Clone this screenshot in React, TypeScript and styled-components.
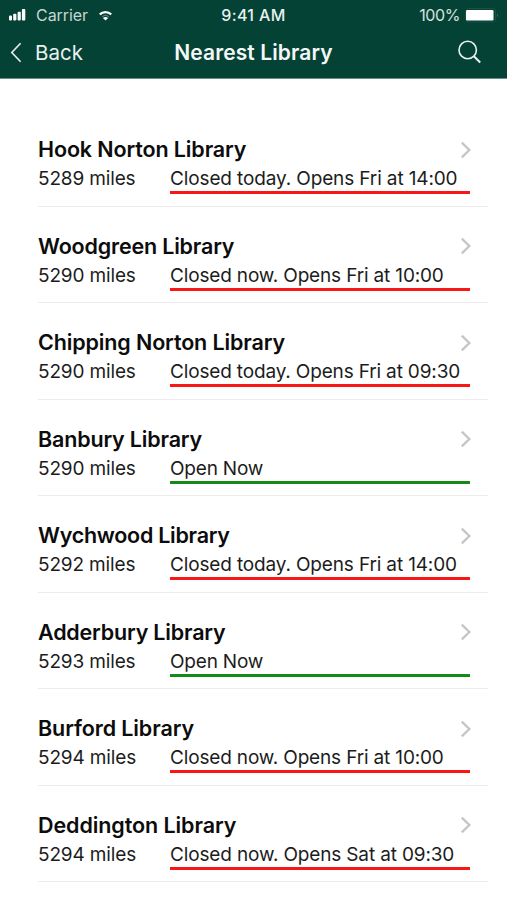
import React from "react";
import styled, { createGlobalStyle } from "styled-components";

const GlobalStyle = createGlobalStyle`
  * { box-sizing: border-box; }
  body { margin: 0; background: #fff; font-family: Inter, "Liberation Sans", sans-serif; }
`;

const Screen = styled.div`
  width: 507px;
  height: 900px;
  overflow: hidden;
  background: #fff;
  color: #0c0c0c;
`;

const Header = styled.header`
  height: 79px;
  background: #054236;
  border-bottom: 1px solid #6d8f87;
  color: #e8f1ee;
`;

const StatusBar = styled.div`
  display: grid;
  grid-template-columns: 1fr auto 1fr;
  align-items: center;
  height: 30px;
  padding: 0 8px;
  font-size: 16px;
  line-height: 20px;
`;

const StatusGroup = styled.div<{ $end?: boolean }>`
  display: flex;
  align-items: center;
  justify-content: ${(p) => (p.$end ? "flex-end" : "flex-start")};
`;

const Carrier = styled.span`
  margin: 0 11px 0 10px;
  letter-spacing: -0.05px;
  color: #c5d5d0;
`;

const Clock = styled.span`
  font-weight: 500;
  letter-spacing: 0.4px;
`;

const Charge = styled.span`
  margin-right: 5px;
  letter-spacing: -0.4px;
  color: #d5e2de;
`;

const NavBar = styled.nav`
  display: grid;
  grid-template-columns: 1fr auto 1fr;
  align-items: center;
  height: 45px;
  padding: 0 10px;
  line-height: 28px;
`;

const BackButton = styled.button`
  display: flex;
  align-items: center;
  gap: 13px;
  padding: 0;
  border: 0;
  background: none;
  color: inherit;
  font: 400 20.5px/28px Inter, sans-serif;
  letter-spacing: 0;
`;

const NavTitle = styled.h1`
  margin: 0;
  font-size: 21px;
  font-weight: 600;
  letter-spacing: 0.1px;
  color: #f3f8f6;
`;

const SearchButton = styled.button`
  justify-self: end;
  display: flex;
  margin: 0 15px 2px 0;
  padding: 0;
  border: 0;
  background: none;
  color: inherit;
`;

const List = styled.ul`
  margin: 31px 19px 0 38px;
  padding: 0;
  list-style: none;
`;

const Row = styled.li`
  height: 96.5px;
  padding: 25px 17.5px 0 0;
  border-bottom: 1px solid #ececec;
`;

const RowTop = styled.div`
  display: flex;
  align-items: center;
  justify-content: space-between;
  height: 29px;
`;

const Name = styled.h2<{ $tracking: number }>`
  margin: 0;
  font-size: 21.5px;
  line-height: 29px;
  font-weight: 600;
  letter-spacing: ${(p) => p.$tracking}px;
  white-space: nowrap;
`;

const Details = styled.div`
  display: grid;
  grid-template-columns: 132px 300px;
  font-size: 19px;
  line-height: 30px;
  color: #1c1c1c;
  white-space: nowrap;
`;

const Distance = styled.span`
  letter-spacing: -0.15px;
`;

const Status = styled.span<{ $open: boolean; $tracking: number }>`
  height: 30px;
  border-bottom: 3px solid ${(p) => (p.$open ? "#168a16" : "#fb1616")};
  letter-spacing: ${(p) => p.$tracking}px;
`;

const Signal = () => (
  <svg width="18" height="12" viewBox="0 0 18 12" fill="#fff">
    <rect x="1" y="6.5" width="3" height="5" rx="1" />
    <rect x="5.2" y="4.7" width="3.2" height="6.8" rx="1" />
    <rect x="9.6" y="2.7" width="3.2" height="8.8" rx="1" />
    <rect x="13.9" y="0" width="3.4" height="11.5" rx="1" />
  </svg>
);

const Wifi = () => (
  <svg width="13" height="11" viewBox="0 0 13 11" fill="none" stroke="#fff">
    <path d="M.8 4.4C4 1.4 9 1.4 12.2 4.4" strokeWidth="2.3" />
    <path d="M3.2 6.8C5.1 5.1 7.9 5.1 9.8 6.8" strokeWidth="1.1" opacity=".35" />
    <path d="M3.9 8Q6.5 5.8 9.1 8L6.5 10.6Z" fill="#fff" stroke="none" />
  </svg>
);

const Battery = () => (
  <svg width="34" height="15" viewBox="0 0 34 15">
    <rect x=".5" y=".5" width="30" height="13.5" rx="3" fill="none" stroke="#1b5145" />
    <rect x="1" y="2" width="27.5" height="10.5" rx="1.2" fill="#fff" />
    <path d="M32 5.3Q34 7.3 32 9.3Z" fill="#386a5f" />
  </svg>
);

const BackIcon = () => (
  <svg width="12" height="22" viewBox="0 0 12 22" fill="none" stroke="currentColor" strokeWidth="1.6">
    <path d="M10.6 1.2 1.8 10.5l8.8 9.3" />
  </svg>
);

const SearchIcon = () => (
  <svg width="24" height="24" viewBox="0 0 24 24" fill="none" stroke="currentColor" strokeWidth="1.6">
    <circle cx="9.7" cy="10" r="8.7" />
    <path d="m15.9 16.2 6.3 6.3" strokeWidth="2" />
  </svg>
);

const Chevron = () => (
  <svg width="11" height="18" viewBox="0 0 11 18" fill="none" stroke="#c5c5c8" strokeWidth="2.4">
    <path d="m1.8 1.6 7.6 7.4-7.6 7.4" />
  </svg>
);

type Library = { name: string; miles: number; status: string; open?: boolean; nameTracking: number; statusTracking: number };

const libraries: Library[] = [
  { name: "Hook Norton Library", miles: 5289, status: "Closed today. Opens Fri at 14:00", nameTracking: -0.12, statusTracking: -0.13 },
  { name: "Woodgreen Library", miles: 5290, status: "Closed now. Opens Fri at 10:00", nameTracking: -0.18, statusTracking: -0.16 },
  { name: "Chipping Norton Library", miles: 5290, status: "Closed today. Opens Fri at 09:30", nameTracking: -0.13, statusTracking: -0.16 },
  { name: "Banbury Library", miles: 5290, status: "Open Now", open: true, nameTracking: -0.17, statusTracking: -0.2 },
  { name: "Wychwood Library", miles: 5292, status: "Closed today. Opens Fri at 14:00", nameTracking: -0.27, statusTracking: -0.15 },
  { name: "Adderbury Library", miles: 5293, status: "Open Now", open: true, nameTracking: -0.19, statusTracking: -0.2 },
  { name: "Burford Library", miles: 5294, status: "Closed now. Opens Fri at 10:00", nameTracking: -0.1, statusTracking: -0.16 },
  { name: "Deddington Library", miles: 5294, status: "Closed now. Opens Sat at 09:30", nameTracking: -0.08, statusTracking: -0.15 },
];

export default function App() {
  return (
    <Screen>
      <GlobalStyle />
      <Header>
        <StatusBar>
          <StatusGroup>
            <Signal />
            <Carrier>Carrier</Carrier>
            <Wifi />
          </StatusGroup>
          <Clock>9:41 AM</Clock>
          <StatusGroup $end>
            <Charge>100%</Charge>
            <Battery />
          </StatusGroup>
        </StatusBar>
        <NavBar>
          <BackButton>
            <BackIcon />
            Back
          </BackButton>
          <NavTitle>Nearest Library</NavTitle>
          <SearchButton aria-label="Search">
            <SearchIcon />
          </SearchButton>
        </NavBar>
      </Header>
      <List>
        {libraries.map((lib) => (
          <Row key={lib.name}>
            <RowTop>
              <Name $tracking={lib.nameTracking}>{lib.name}</Name>
              <Chevron />
            </RowTop>
            <Details>
              <Distance>{lib.miles} miles</Distance>
              <Status $open={!!lib.open} $tracking={lib.statusTracking}>
                {lib.status}
              </Status>
            </Details>
          </Row>
        ))}
      </List>
    </Screen>
  );
}
